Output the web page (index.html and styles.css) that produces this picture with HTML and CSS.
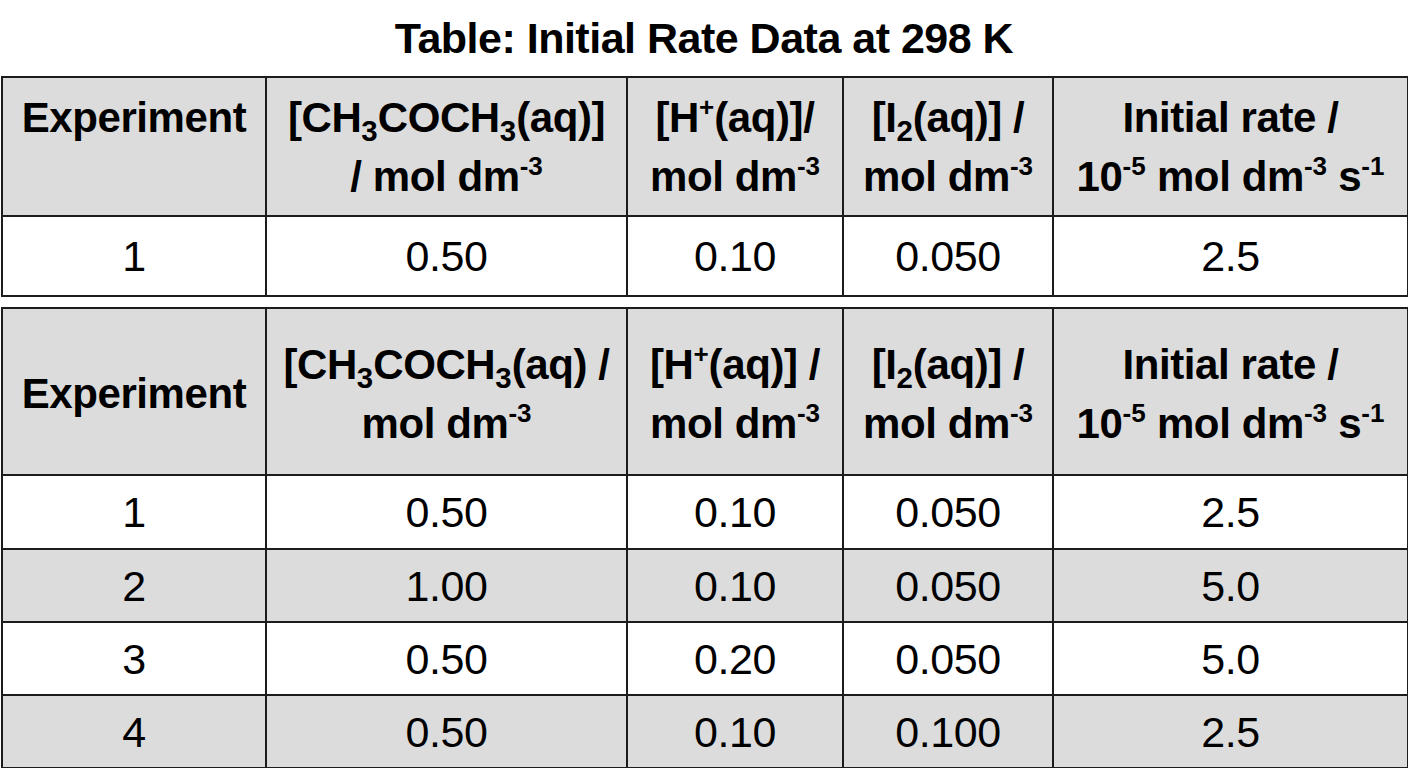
FILE: index.html
```html
<!DOCTYPE html>
<html lang="en">
<head>
<meta charset="utf-8">
<title>Initial Rate Data</title>
<link rel="stylesheet" href="styles.css">
</head>
<body>
<div class="page">
  <h1 class="title">Table: Initial Rate Data at 298 K</h1>

  <table class="data data-first">
    <colgroup>
      <col class="c1"><col class="c2"><col class="c3"><col class="c4"><col class="c5">
    </colgroup>
    <thead>
      <tr class="head-row head-top">
        <th>Experiment</th>
        <th>[CH<span class="sub">3</span>COCH<span class="sub">3</span>(aq)]<br>/ mol dm<span class="sup">-3</span></th>
        <th>[H<span class="sup">+</span>(aq)]/<br>mol dm<span class="sup">-3</span></th>
        <th>[I<span class="sub">2</span>(aq)] /<br>mol dm<span class="sup">-3</span></th>
        <th>Initial rate /<br>10<span class="sup">-5</span> mol dm<span class="sup">-3</span> s<span class="sup">-1</span></th>
      </tr>
    </thead>
    <tbody>
      <tr class="row row-first">
        <td>1</td><td>0.50</td><td>0.10</td><td>0.050</td><td>2.5</td>
      </tr>
    </tbody>
  </table>

  <table class="data data-second">
    <colgroup>
      <col class="c1"><col class="c2"><col class="c3"><col class="c4"><col class="c5">
    </colgroup>
    <thead>
      <tr class="head-row head-mid">
        <th>Experiment</th>
        <th>[CH<span class="sub">3</span>COCH<span class="sub">3</span>(aq) /<br>mol dm<span class="sup">-3</span></th>
        <th>[H<span class="sup">+</span>(aq)] /<br>mol dm<span class="sup">-3</span></th>
        <th>[I<span class="sub">2</span>(aq)] /<br>mol dm<span class="sup">-3</span></th>
        <th>Initial rate /<br>10<span class="sup">-5</span> mol dm<span class="sup">-3</span> s<span class="sup">-1</span></th>
      </tr>
    </thead>
    <tbody>
      <tr class="row row-a"><td>1</td><td>0.50</td><td>0.10</td><td>0.050</td><td>2.5</td></tr>
      <tr class="row row-b shade"><td>2</td><td>1.00</td><td>0.10</td><td>0.050</td><td>5.0</td></tr>
      <tr class="row row-b"><td>3</td><td>0.50</td><td>0.20</td><td>0.050</td><td>5.0</td></tr>
      <tr class="row row-b shade"><td>4</td><td>0.50</td><td>0.10</td><td>0.100</td><td>2.5</td></tr>
    </tbody>
  </table>
</div>
</body>
</html>
```

FILE: styles.css
```css
* {
  box-sizing: border-box;
}

html, body {
  margin: 0;
  padding: 0;
  background: #ffffff;
}

body {
  font-family: "Liberation Sans", Arial, Helvetica, sans-serif;
  color: #000000;
}

.page {
  width: 1408px;
  height: 768px;
  padding: 0 1px;
  overflow: hidden;
}

.title {
  margin: 0;
  padding: 14px 0;
  font-size: 43px;
  line-height: 48px;
  font-weight: 700;
  text-align: center;
  letter-spacing: -0.5px;
}

.data {
  width: 1406px;
  border-collapse: collapse;
  table-layout: fixed;
}

.data-second {
  margin-top: 10px;
}

.c1 { width: 264px; }
.c2 { width: 361px; }
.c3 { width: 216px; }
.c4 { width: 210px; }
.c5 { width: 355px; }

.data th,
.data td {
  border: 2px solid #1c1c1c;
  text-align: center;
  padding: 0;
}

.data th {
  background: #dcdcdc;
  font-size: 42px;
  font-weight: 700;
  line-height: 59px;
  letter-spacing: -0.4px;
  white-space: nowrap;
}

.head-top th {
  height: 139px;
  vertical-align: top;
  padding-top: 10px;
}

.head-mid th {
  height: 167px;
  vertical-align: middle;
  padding-top: 4px;
}

.data td {
  font-size: 43px;
  font-weight: 400;
  line-height: 50px;
  letter-spacing: -0.4px;
  vertical-align: middle;
  background: #ffffff;
}

.row-first td {
  height: 80px;
}

.row-a td {
  height: 74px;
}

.row-b td {
  height: 73px;
}

.shade td {
  background: #dcdcdc;
}

.sub {
  font-size: 0.7em;
  vertical-align: -0.3em;
  line-height: 0;
  letter-spacing: 0;
}

.sup {
  font-size: 0.62em;
  vertical-align: 0.6em;
  line-height: 0;
  letter-spacing: 0;
}
```
